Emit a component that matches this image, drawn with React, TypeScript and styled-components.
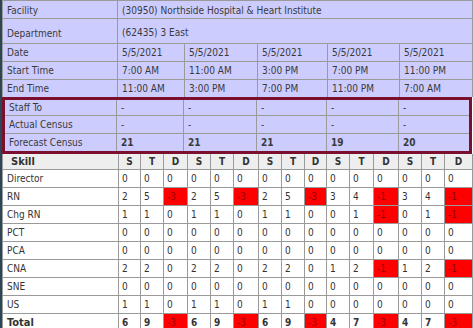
import React from "react";
import styled, { createGlobalStyle } from "styled-components";

const Global = createGlobalStyle`
  * { box-sizing: border-box; }
  html, body { margin: 0; padding: 0; background: #ffffff; overflow: hidden; }
  body { font-family: "DejaVu Sans Condensed", "DejaVu Sans", Verdana, sans-serif; font-size: 10px; color: #333333; }
`;

const Frame = styled.div`
  width: 473px;
  height: 328px;
  border-left: 2px solid #2d4656;
  overflow: hidden;
`;

const Table = styled.table`
  width: 470px;
  table-layout: fixed;
  border-collapse: separate;
  border-spacing: 0;
  border-left: 1px solid #9a9a9a;
`;

const TopTable = styled(Table)`
  border-top: 1px solid #9a9a9a;
  background: #ccccff;
`;

const Cell = styled.td<{ $h?: number; $last?: boolean; $bold?: boolean; $valign?: string; $pt?: number }>`
  height: ${(p) => p.$h ?? 18}px;
  border-right: 1px solid #9a9a9a;
  border-bottom: ${(p) => (p.$last ? "none" : "1px solid #9a9a9a")};
  padding: ${(p) => p.$pt ?? 0}px 4px 0 4px;
  vertical-align: ${(p) => p.$valign ?? "middle"};
  font-weight: ${(p) => (p.$bold ? "bold" : "normal")};
  white-space: nowrap;
  overflow: hidden;
  color: #3a3a3a;
`;

const CensusBox = styled.div`
  width: 470px;
  border: 3px solid #7a0f2e;
  background: #ccccff;
`;

const CensusTable = styled.table`
  width: 464px;
  table-layout: fixed;
  border-collapse: separate;
  border-spacing: 0;
`;

const CensusCell = styled(Cell)<{ $edge?: boolean }>`
  border-right: ${(p) => (p.$edge ? "none" : "1px solid #9a9a9a")};
`;

const SkillTable = styled(Table)`
  background: #ffffff;
`;

const Head = styled.th<{ $left?: boolean }>`
  height: 16px;
  background: #eeeeee;
  border-right: 1px solid #9a9a9a;
  border-bottom: 1px solid #9a9a9a;
  padding: 0 ${(p) => (p.$left ? "8px" : "0")};
  text-align: ${(p) => (p.$left ? "left" : "center")};
  font-weight: bold;
  font-size: ${(p) => (p.$left ? "11px" : "10px")};
  color: #333333;
`;

const Num = styled.td<{ $neg?: boolean; $bold?: boolean }>`
  height: 18px;
  border-right: 1px solid #9a9a9a;
  border-bottom: 1px solid #9a9a9a;
  padding: 0 3px;
  vertical-align: middle;
  background: ${(p) => (p.$neg ? "#ff0000" : "transparent")};
  color: ${(p) => (p.$neg ? "#9b0000" : "#333333")};
  font-weight: ${(p) => (p.$bold ? "bold" : "normal")};
  white-space: nowrap;
  overflow: hidden;
`;

const SkillName = styled(Num)`
  padding: 0 4px;
  font-size: ${(p) => (p.$bold ? "11px" : "10px")};
`;

const topCols = [115, 67, 73, 70, 72, 73];
const censusCols = [112, 67, 73, 70, 72, 70];
const skillCols = [116, 22, 23, 24, 23, 23, 25, 23, 23, 22, 23, 24, 25, 23, 23, 28];

const dates = ["5/5/2021", "5/5/2021", "5/5/2021", "5/5/2021", "5/5/2021"];
const starts = ["7:00 AM", "11:00 AM", "3:00 PM", "7:00 PM", "11:00 PM"];
const ends = ["11:00 AM", "3:00 PM", "7:00 PM", "11:00 PM", "7:00 AM"];
const forecast = ["21", "21", "21", "19", "20"];

type Row = { name: string; vals: number[]; bold?: boolean };
const skills: Row[] = [
  { name: "Director", vals: [0, 0, 0, 0, 0, 0, 0, 0, 0, 0, 0, 0, 0, 0, 0] },
  { name: "RN", vals: [2, 5, -3, 2, 5, -3, 2, 5, -3, 3, 4, -1, 3, 4, -1] },
  { name: "Chg RN", vals: [1, 1, 0, 1, 1, 0, 1, 1, 0, 0, 1, -1, 0, 1, -1] },
  { name: "PCT", vals: [0, 0, 0, 0, 0, 0, 0, 0, 0, 0, 0, 0, 0, 0, 0] },
  { name: "PCA", vals: [0, 0, 0, 0, 0, 0, 0, 0, 0, 0, 0, 0, 0, 0, 0] },
  { name: "CNA", vals: [2, 2, 0, 2, 2, 0, 2, 2, 0, 1, 2, -1, 1, 2, -1] },
  { name: "SNE", vals: [0, 0, 0, 0, 0, 0, 0, 0, 0, 0, 0, 0, 0, 0, 0] },
  { name: "US", vals: [1, 1, 0, 1, 1, 0, 1, 1, 0, 0, 0, 0, 0, 0, 0] },
  { name: "Total", vals: [6, 9, -3, 6, 9, -3, 6, 9, -3, 4, 7, -3, 4, 7, -3], bold: true },
];

function Cols({ widths }: { widths: number[] }) {
  return (
    <colgroup>
      {widths.map((w, i) => (
        <col key={i} style={{ width: w }} />
      ))}
    </colgroup>
  );
}

export default function App() {
  return (
    <>
      <Global />
      <Frame>
        <TopTable>
          <Cols widths={topCols} />
          <tbody>
            <tr>
              <Cell $h={18} $pt={2}>Facility</Cell>
              <Cell $h={18} $pt={2} colSpan={5}>(30950) Northside Hospital &amp; Heart Institute</Cell>
            </tr>
            <tr>
              <Cell $h={25} $pt={5}>Department</Cell>
              <Cell $h={25} $pt={2} colSpan={5}>(62435) 3 East</Cell>
            </tr>
            <tr>
              <Cell>Date</Cell>
              {dates.map((d, i) => (
                <Cell key={i}>{d}</Cell>
              ))}
            </tr>
            <tr>
              <Cell>Start Time</Cell>
              {starts.map((d, i) => (
                <Cell key={i}>{d}</Cell>
              ))}
            </tr>
            <tr>
              <Cell $h={17} $last>End Time</Cell>
              {ends.map((d, i) => (
                <Cell key={i} $h={17} $last>{d}</Cell>
              ))}
            </tr>
          </tbody>
        </TopTable>
        <CensusBox>
          <CensusTable>
            <Cols widths={censusCols} />
            <tbody>
              <tr>
                <CensusCell $h={16}>Staff To</CensusCell>
                {forecast.map((_, i) => (
                  <CensusCell key={i} $h={16} $edge={i === 4}>-</CensusCell>
                ))}
              </tr>
              <tr>
                <CensusCell>Actual Census</CensusCell>
                {forecast.map((_, i) => (
                  <CensusCell key={i} $edge={i === 4}>-</CensusCell>
                ))}
              </tr>
              <tr>
                <CensusCell $h={17} $last>Forecast Census</CensusCell>
                {forecast.map((f, i) => (
                  <CensusCell key={i} $h={17} $last $bold $edge={i === 4}>{f}</CensusCell>
                ))}
              </tr>
            </tbody>
          </CensusTable>
        </CensusBox>
        <SkillTable>
          <Cols widths={skillCols} />
          <thead>
            <tr>
              <Head $left>Skill</Head>
              {[0, 1, 2, 3, 4].map((i) => (
                <React.Fragment key={i}>
                  <Head>S</Head>
                  <Head>T</Head>
                  <Head>D</Head>
                </React.Fragment>
              ))}
            </tr>
          </thead>
          <tbody>
            {skills.map((r) => (
              <tr key={r.name}>
                <SkillName $bold={r.bold}>{r.name}</SkillName>
                {r.vals.map((v, i) => (
                  <Num key={i} $neg={v < 0} $bold={r.bold && v >= 0}>{v}</Num>
                ))}
              </tr>
            ))}
          </tbody>
        </SkillTable>
      </Frame>
    </>
  );
}
